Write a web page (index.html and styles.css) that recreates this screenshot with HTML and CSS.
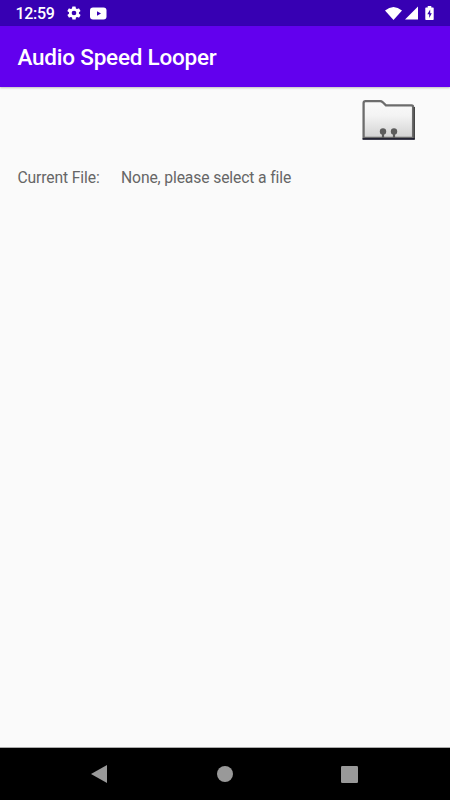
FILE: index.html
```html
<!DOCTYPE html>
<html lang="en">
<head>
<meta charset="utf-8">
<title>Audio Speed Looper</title>
<link rel="stylesheet" href="styles.css">
</head>
<body>
<header class="status">
  <span class="clock">12:59</span>
  <svg class="gear" width="16" height="16" viewBox="0 0 24 24"><path fill="#fff" fill-rule="evenodd" d="M19.4 13a7.500 7.500 0 0 0 0-2l2.100-1.600a.5.5 0 0 0 .1-.6l-2-3.500a.5.5 0 0 0-.6-.2l-2.500 1a7.300 7.300 0 0 0-1.700-1l-.4-2.600a.5.5 0 0 0-.5-.4h-4a.5.5 0 0 0-.5.4L9 5.100a7.700 7.700 0 0 0-1.700 1l-2.500-1a.5.5 0 0 0-.6.2l-2 3.500a.5.5 0 0 0 .1.600L4.500 11a7.500 7.500 0 0 0 0 2l-2.100 1.600a.5.5 0 0 0-.1.600l2 3.500a.5.5 0 0 0 .6.200l2.500-1a7.300 7.300 0 0 0 1.700 1l.4 2.600a.5.5 0 0 0 .5.400h4a.5.5 0 0 0 .5-.4l.4-2.600a7.700 7.700 0 0 0 1.700-1l2.500 1a.5.5 0 0 0 .6-.2l2-3.500a.5.5 0 0 0-.1-.6zM12 15.500a3.500 3.500 0 1 1 0-7 3.500 3.500 0 0 1 0 7z"/></svg>
  <svg class="video" width="17" height="13" viewBox="0 0 17 13"><rect y=".5" width="16.500" height="12" rx="3" fill="#fff"/><path d="M7 4.200v4.600L11 6.500z" fill="#3700b3"/></svg>
  <svg class="wifi" width="17" height="13" viewBox="0 0 17 13"><path d="M0 3.500Q8.500-3.500 17 3.500L8.500 13z" fill="#fff"/></svg>
  <svg class="signal" width="13" height="14" viewBox="0 0 13 14"><path d="M13 .5v13H0z" fill="#fff"/></svg>
  <svg class="battery" width="9" height="14" viewBox="0 0 9 14"><path d="M2.700 0h3.600v1.400H8q.7 0 .7.700V13.300q0 .7-.7.700H1q-.7 0-.7-.7V2.100q0-.7.7-.7h1.700z" fill="#fff"/><path d="M5.200 3.400 2.300 8.300h1.900v3.600l2.600-4.700H5.200z" fill="#3700b3"/></svg>
</header>
<div class="appbar"><h1>Audio Speed Looper</h1></div>
<main>
  <div class="actions">
    <svg class="folder" width="54" height="42" viewBox="0 0 54 42">
      <defs>
        <linearGradient id="face" x1="0" y1="0" x2="0" y2="1"><stop offset="0" stop-color="#fafafa"/><stop offset=".4" stop-color="#f3f3f3"/><stop offset="1" stop-color="#d2d2d2"/></linearGradient>
      </defs>
      <g transform="translate(.6 0)">
        <path d="M2 39V4Q2 2.200 4 2.200H18.500Q20 2.200 21.200 3.300L24.300 6.400H50Q51.500 6.400 51.500 8V39z" fill="url(#face)" stroke="#6c6c6c" stroke-width="2.300"/>
        <path d="M52.700 8V40.500" stroke="#222" stroke-width="1"/>
        <path d="M1 40H53" stroke="#0c0c20" stroke-width="1.400"/>
        <g fill="#5c5c5c"><circle cx="21.400" cy="32.500" r="3.200"/><circle cx="32.400" cy="32.500" r="3.200"/><path d="M20.300 34h2.200v5h-2.200zM31.300 34h2.200v5h-2.200z"/></g>
      </g>
    </svg>
  </div>
  <div class="file"><span class="label">Current File:</span><span class="value">None, please select a file</span></div>
</main>
<nav>
  <svg width="16" height="18" viewBox="0 0 16 18"><path d="M0 9 16 0v18z" fill="#999"/></svg>
  <svg width="16" height="16" viewBox="0 0 16 16"><circle cx="8" cy="8" r="8" fill="#999"/></svg>
  <svg width="17" height="17" viewBox="0 0 17 17"><rect width="17" height="17" rx="1.300" fill="#999"/></svg>
</nav>
</body>
</html>
```
FILE: styles.css
```css
* { box-sizing: border-box; }
body {
  margin: 0;
  height: 800px;
  display: flex;
  flex-direction: column;
  overflow: hidden;
  background: #fafafa;
  font-family: Roboto, sans-serif;
}
svg { display: block; flex: none; }
.status {
  height: 26px;
  flex: none;
  display: flex;
  align-items: center;
  padding: 0 16px 0 15px;
  background: #3700b3;
  color: #fff;
}
.clock {
  width: 51px;
  font-size: 16px;
  font-weight: 500;
  letter-spacing: -.3px;
  line-height: 26px;
  padding: 2px 0 0 .5px;
  white-space: nowrap;
}
.video { margin-left: 8px; }
.wifi { margin-left: auto; }
.signal { margin-left: 3px; }
.battery { margin-left: 7px; }
.appbar {
  height: 61px;
  flex: none;
  display: flex;
  align-items: center;
  padding: 1px 0 0 17.500px;
  background: #6200ee;
  box-shadow: 0 1px 2px rgba(0, 0, 0, .25);
}
h1 {
  margin: 0;
  color: #fff;
  font-size: 22.500px;
  font-weight: 500;
  letter-spacing: -.22px;
  line-height: 30px;
  white-space: nowrap;
}
main { flex: 1; }
.actions {
  display: flex;
  justify-content: flex-end;
  padding: 12px 35px 0 0;
}
.folder { filter: blur(.5px); }
.file {
  display: flex;
  margin-top: 26px;
  padding-left: 17.500px;
  color: #666;
  font-size: 15.700px;
  letter-spacing: -.13px;
  line-height: 22px;
  white-space: nowrap;
}
.label { width: 103.500px; }
nav {
  height: 53px;
  flex: none;
  display: flex;
  justify-content: space-between;
  align-items: center;
  padding: 0 92px 0 91px;
  background: #000;
  border-top: 1px solid #aaa;
}
nav svg:nth-child(2) { margin-left: 1px; }
```
